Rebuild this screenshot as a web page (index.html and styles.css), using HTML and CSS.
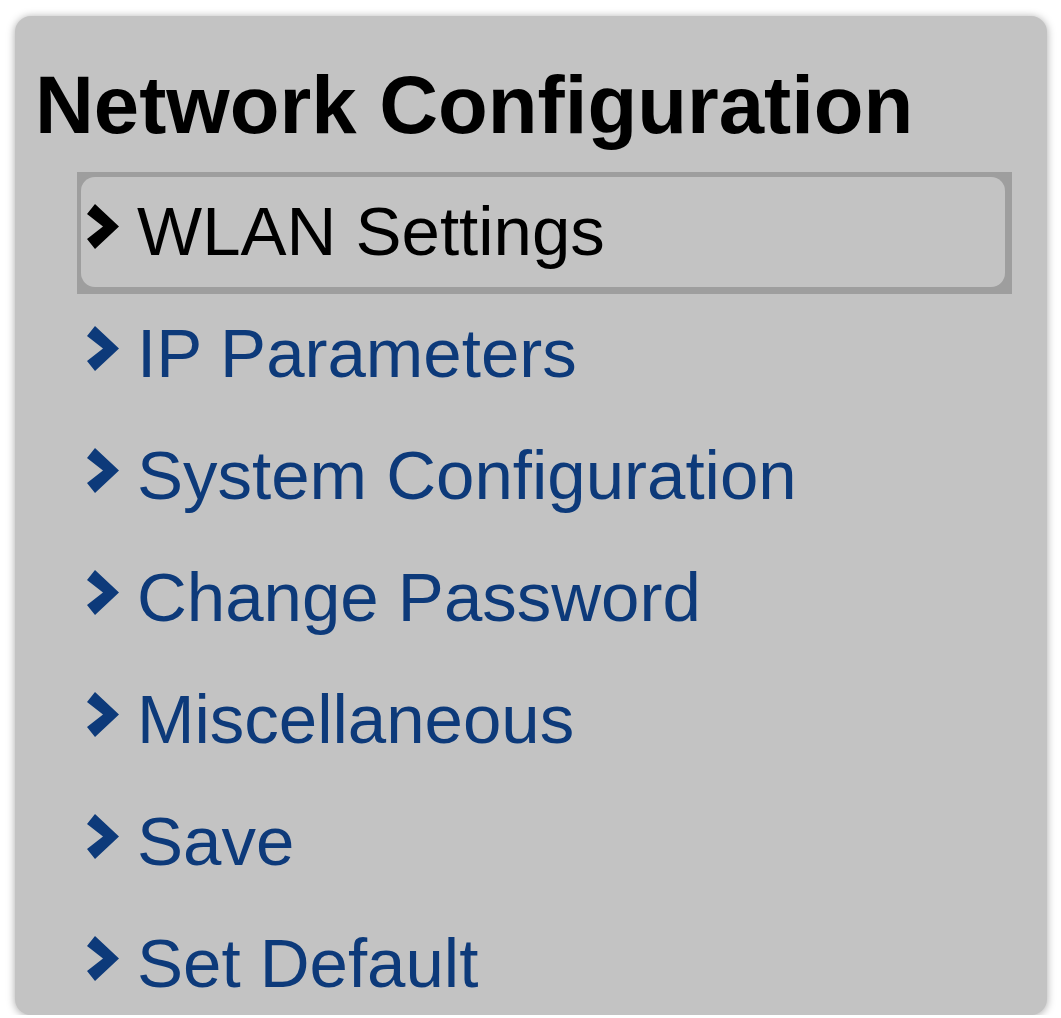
FILE: index.html
```html
<!DOCTYPE html>
<html lang="en">
<head>
    <meta charset="UTF-8">
    <title>Network Configuration</title>
    <link rel="stylesheet" href="styles.css">
</head>
<body>
    <div class="menu">
        <h1>Network Configuration</h1>
        <ul class="menu-list">
            <li class="menu-item active"><a href="#"><svg class="chevron" viewBox="0 0 34 45"><polygon points="2,10 10,0 34,22.5 10,45 2,35 18,22.5"/></svg><span>WLAN Settings</span></a></li>
            <li class="menu-item"><a href="#"><svg class="chevron" viewBox="0 0 34 45"><polygon points="2,10 10,0 34,22.5 10,45 2,35 18,22.5"/></svg><span>IP Parameters</span></a></li>
            <li class="menu-item"><a href="#"><svg class="chevron" viewBox="0 0 34 45"><polygon points="2,10 10,0 34,22.5 10,45 2,35 18,22.5"/></svg><span>System Configuration</span></a></li>
            <li class="menu-item"><a href="#"><svg class="chevron" viewBox="0 0 34 45"><polygon points="2,10 10,0 34,22.5 10,45 2,35 18,22.5"/></svg><span>Change Password</span></a></li>
            <li class="menu-item"><a href="#"><svg class="chevron" viewBox="0 0 34 45"><polygon points="2,10 10,0 34,22.5 10,45 2,35 18,22.5"/></svg><span>Miscellaneous</span></a></li>
            <li class="menu-item"><a href="#"><svg class="chevron" viewBox="0 0 34 45"><polygon points="2,10 10,0 34,22.5 10,45 2,35 18,22.5"/></svg><span>Save</span></a></li>
            <li class="menu-item"><a href="#"><svg class="chevron" viewBox="0 0 34 45"><polygon points="2,10 10,0 34,22.5 10,45 2,35 18,22.5"/></svg><span>Set Default</span></a></li>
        </ul>
    </div>
</body>
</html>
```

FILE: styles.css
```css
body {
    margin: 0;
    background-color: #fff;
    font-family: "Liberation Sans", Arial, sans-serif;
}
.menu {
    margin: 16px 0 0 15px;
    width: 1032px;
    height: 999px;
    box-sizing: border-box;
    padding: 39px 35px 0 20px;
    background-color: #c3c3c3;
    border-radius: 16px;
    box-shadow: 0 1px 8px rgba(0, 0, 0, 0.35);
    overflow: hidden;
}
h1 {
    margin: 0;
    font-size: 81.5px;
    line-height: 100px;
    font-weight: bold;
    color: #000;
}
.menu-list {
    list-style: none;
    margin: 17px 0 0 42px;
    padding: 0;
}
.menu-item {
    padding: 5px 7px 7px 4px;
}
.menu-item a {
    display: flex;
    align-items: flex-start;
    height: 110px;
    padding-left: 4px;
    border-radius: 14px;
    color: #0d3a7a;
    text-decoration: none;
    font-size: 69px;
    line-height: 110px;
}
.menu-item.active {
    background-color: #9e9e9e;
}
.menu-item.active a {
    background-color: #c3c3c3;
    color: #000;
}
.chevron {
    width: 34px;
    height: 45px;
    margin-top: 27px;
    margin-right: 18px;
    flex-shrink: 0;
    fill: #0d3a7a;
}
.menu-item.active .chevron {
    fill: #000;
}
```
